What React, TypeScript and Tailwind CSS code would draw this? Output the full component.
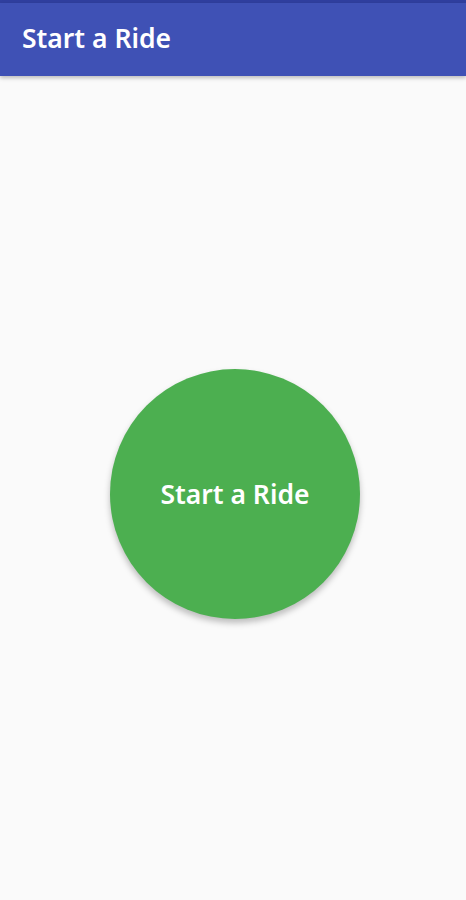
export default function App() {
  return (
    <div className="w-[466px] h-[900px] flex flex-col bg-[#fafafa]" style={{ fontFamily: '"Noto Sans", sans-serif' }}>
      <div className="h-[3px] bg-[#303f9f]" />
      <header className="h-[73px] bg-[#3f51b5] flex items-center pl-[22px] shadow-[0_2px_4px_rgba(0,0,0,0.25)] z-10">
        <h1 className="text-white text-[26.5px] font-semibold leading-none pb-[2px]">Start a Ride</h1>
      </header>
      <main className="flex-1 flex items-center justify-center pt-3 pl-1">
        <button className="w-[250px] h-[250px] rounded-full bg-[#4caf50] text-white text-[26.5px] font-semibold leading-none shadow-[0_4px_6px_rgba(0,0,0,0.25)]">
          Start a Ride
        </button>
      </main>
    </div>
  );
}
